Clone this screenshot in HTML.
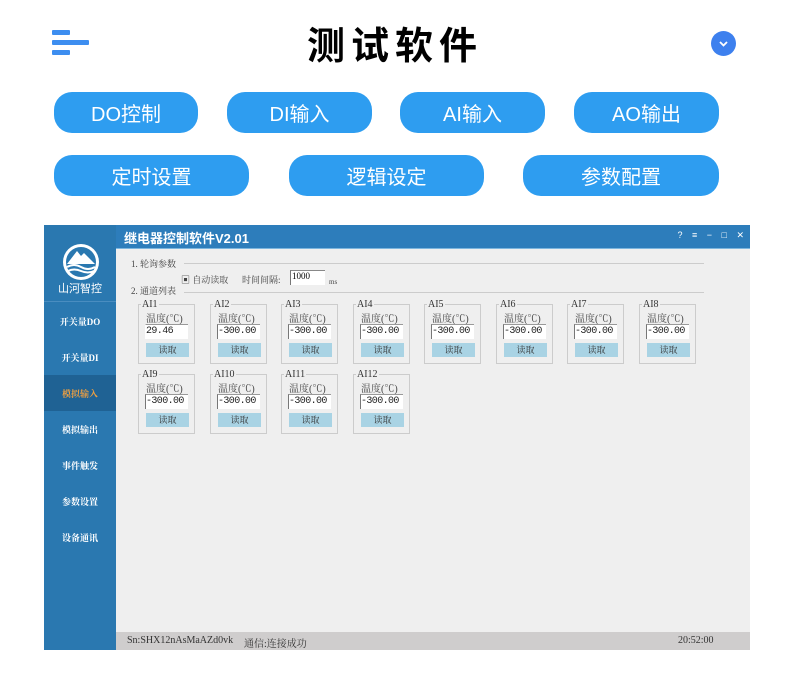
<!DOCTYPE html>
<html><head><meta charset="utf-8"><style>
*{margin:0;padding:0;box-sizing:border-box}
body{width:790px;height:691px;background:#fff;position:relative;overflow:hidden;font-family:"Liberation Sans","Noto Sans CJK SC",sans-serif}
.a{position:absolute}
.bar{position:absolute;left:52px;height:5px;background:#3d8ef0;border-radius:1px}
.btn{position:absolute;background:#2e9df0;color:#fff;border-radius:18px;font-size:20px;display:flex;align-items:center;justify-content:center;height:41px}
.win{position:absolute;left:44px;top:225px;width:706px;height:425px;background:#efefef}
.side{position:absolute;left:0;top:0;width:72px;height:425px;background:#2a78b0}
.mi{position:absolute;left:0;width:72px;height:36px;color:#fff;font-size:9px;font-weight:bold;display:flex;align-items:center;justify-content:center;font-family:"Liberation Serif","Noto Serif CJK SC",serif}
.tb{position:absolute;left:72px;top:0;width:634px;height:24px;background:#2d7dbb;border-bottom:1px solid #7db6de}
.st{font-family:"Liberation Serif","Noto Serif CJK SC",serif;color:#444;font-size:9px;position:absolute}
.gb{position:absolute;width:57px;height:60px;border:1px solid #ccc}
.gb .t{position:absolute;left:2px;top:-6px;background:#efefef;font-family:"Liberation Serif","Noto Serif CJK SC",serif;font-size:10px;color:#333;padding:0 1px;line-height:11px}
.gb .l{position:absolute;left:7px;top:5px;font-family:"Liberation Serif","Noto Serif CJK SC",serif;font-size:10px;color:#444}
.gb .i{position:absolute;left:6px;top:19px;width:43px;height:15px;background:#fff;border-left:1px solid #777;border-top:1px solid #999;font-family:"Liberation Mono",monospace;font-size:10px;color:#222;line-height:14px;padding-left:0;letter-spacing:-0.6px;overflow:hidden;white-space:nowrap}
.gb .b{position:absolute;left:7px;top:38px;width:43px;height:14px;background:#a9d3e4;font-family:"Liberation Serif","Noto Serif CJK SC",serif;font-size:9px;color:#333;text-align:center;line-height:14px}
</style></head><body>
<div class="bar" style="top:30px;width:18px"></div>
<div class="bar" style="top:40px;width:37px"></div>
<div class="bar" style="top:50px;width:18px"></div>
<div class="a" style="left:0;width:790px;top:15px;text-align:center;font-size:38px;font-weight:bold;color:#000;letter-spacing:6px;font-family:'Noto Sans CJK SC',sans-serif">测试软件</div>
<div class="a" style="left:711px;top:31px;width:25px;height:25px;border-radius:50%;background:#3d80ee"><svg width="25" height="25"><path d="M9 11l3.5 3.5L16 11" stroke="#fff" stroke-width="1.8" fill="none"/></svg></div>
<div class="btn" style="left:54px;top:92px;width:144px">DO控制</div>
<div class="btn" style="left:227px;top:92px;width:145px">DI输入</div>
<div class="btn" style="left:400px;top:92px;width:145px">AI输入</div>
<div class="btn" style="left:574px;top:92px;width:145px">AO输出</div>
<div class="btn" style="left:54px;top:155px;width:195px">定时设置</div>
<div class="btn" style="left:289px;top:155px;width:195px">逻辑设定</div>
<div class="btn" style="left:523px;top:155px;width:196px">参数配置</div>

<div class="win">
<div class="side">
<svg class="a" style="left:17px;top:17px" width="40" height="40" viewBox="0 0 40 40"><circle cx="20" cy="20" r="18" fill="#fff"/><circle cx="20" cy="20" r="15" fill="#2a78b0"/><path d="M6 22L16 9l4 5 3-3 11 11z" fill="#fff"/><path d="M6 25q7-4 14 0t14 0M7 29q6-3 13 0t13 0" stroke="#fff" stroke-width="2" fill="none"/></svg>
<div class="a" style="left:0;width:72px;top:55px;text-align:center;color:#fff;font-size:11px">山河智控</div>
<div class="a" style="left:0;top:76px;width:72px;height:1px;background:#4a8dc0"></div>
<div class="mi" style="top:78px">开关量DO</div>
<div class="mi" style="top:114px">开关量DI</div>
<div class="mi" style="top:150px;background:#1f6294;color:#f0a040">模拟输入</div>
<div class="mi" style="top:186px">模拟输出</div>
<div class="mi" style="top:222px">事件触发</div>
<div class="mi" style="top:258px">参数设置</div>
<div class="mi" style="top:294px">设备通讯</div>
</div>
<div class="tb"><div class="a" style="left:8px;top:3px;color:#fff;font-size:13px;font-weight:bold;font-family:'Liberation Sans','Noto Sans CJK SC',sans-serif">继电器控制软件V2.01</div>
<div class="a" style="right:6px;top:5px;color:#fff;font-size:9px;letter-spacing:0;word-spacing:7px">? ≡ − □ ✕</div></div>
<div class="st" style="left:87px;top:32px">1. 轮询参数</div>
<div class="a" style="left:140px;top:38px;width:520px;height:1px;background:#ccc"></div>
<div class="st" style="left:137px;top:48px">▣ 自动读取</div>
<div class="st" style="left:198px;top:48px">时间间隔:</div>
<div class="a" style="left:246px;top:45px;width:35px;height:15px;background:#fff;border-left:1px solid #777;border-top:1px solid #888;font-size:9px;font-family:'Liberation Serif',serif;padding-left:1px">1000</div>
<div class="st" style="left:285px;top:53px;font-size:7px">ms</div>
<div class="st" style="left:87px;top:59px">2. 通道列表</div>
<div class="a" style="left:140px;top:67px;width:520px;height:1px;background:#ccc"></div>

<div class="gb" style="left:94px;top:79px"><span class="t">AI1</span><span class="l">温度(℃)</span><div class="i" style="border-left-color:#fff">29.46</div><div class="b">读取</div></div>
<div class="gb" style="left:166px;top:79px"><span class="t">AI2</span><span class="l">温度(℃)</span><div class="i">-300.00</div><div class="b">读取</div></div>
<div class="gb" style="left:237px;top:79px"><span class="t">AI3</span><span class="l">温度(℃)</span><div class="i">-300.00</div><div class="b">读取</div></div>
<div class="gb" style="left:309px;top:79px"><span class="t">AI4</span><span class="l">温度(℃)</span><div class="i">-300.00</div><div class="b">读取</div></div>
<div class="gb" style="left:380px;top:79px"><span class="t">AI5</span><span class="l">温度(℃)</span><div class="i">-300.00</div><div class="b">读取</div></div>
<div class="gb" style="left:452px;top:79px"><span class="t">AI6</span><span class="l">温度(℃)</span><div class="i">-300.00</div><div class="b">读取</div></div>
<div class="gb" style="left:523px;top:79px"><span class="t">AI7</span><span class="l">温度(℃)</span><div class="i">-300.00</div><div class="b">读取</div></div>
<div class="gb" style="left:595px;top:79px"><span class="t">AI8</span><span class="l">温度(℃)</span><div class="i">-300.00</div><div class="b">读取</div></div>
<div class="gb" style="left:94px;top:149px"><span class="t">AI9</span><span class="l">温度(℃)</span><div class="i">-300.00</div><div class="b">读取</div></div>
<div class="gb" style="left:166px;top:149px"><span class="t">AI10</span><span class="l">温度(℃)</span><div class="i">-300.00</div><div class="b">读取</div></div>
<div class="gb" style="left:237px;top:149px"><span class="t">AI11</span><span class="l">温度(℃)</span><div class="i">-300.00</div><div class="b">读取</div></div>
<div class="gb" style="left:309px;top:149px"><span class="t">AI12</span><span class="l">温度(℃)</span><div class="i">-300.00</div><div class="b">读取</div></div>

<div class="a" style="left:72px;top:407px;width:634px;height:18px;background:#cfcdcd"></div>
<div class="st" style="left:83px;top:410px;color:#333;font-size:10px">Sn:SHX12nAsMaAZd0vk</div>
<div class="st" style="left:200px;top:410px;color:#333;font-size:10px">通信:连接成功</div>
<div class="st" style="left:634px;top:410px;color:#333;font-size:10px">20:52:00</div>
</div>
</body></html>
